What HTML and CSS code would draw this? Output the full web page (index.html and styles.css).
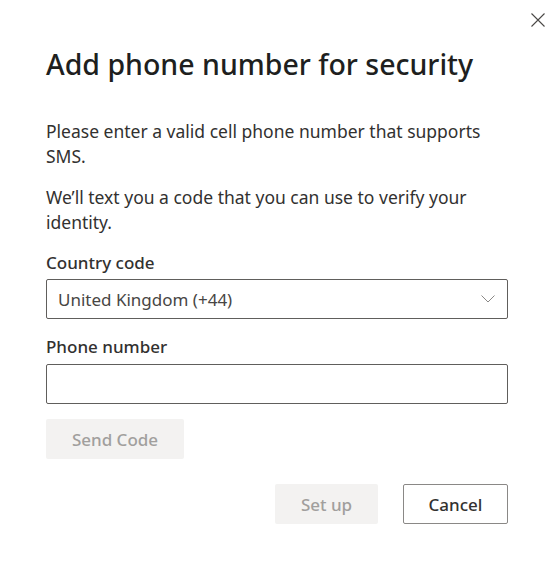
FILE: index.html
```html
<!DOCTYPE html>
<html lang="en">
<head>
    <meta charset="UTF-8">
    <meta name="viewport" content="width=device-width, initial-scale=1.0">
    <title>Add phone number for security</title>
    <link rel="stylesheet" href="styles.css">
</head>
<body>
    <div class="dialog">
        <div class="top-bar">
            <button class="close-btn" aria-label="Close">
                <svg width="14" height="14" viewBox="0 0 14 14">
                    <path d="M0.5 0.5 L13.5 13.5 M13.5 0.5 L0.5 13.5" stroke="#4a4846" stroke-width="1.1" fill="none"/>
                </svg>
            </button>
        </div>
        <h1>Add phone number for security</h1>
        <p>Please enter a valid cell phone number that supports SMS.</p>
        <p>We’ll text you a code that you can use to verify your identity.</p>

        <form id="phone-form">
            <label for="country-code">Country code</label>
            <div class="select-box" id="country-code">
                <span>United Kingdom (+44)</span>
                <svg width="14" height="8" viewBox="0 0 14 8">
                    <path d="M0.5 0.5 L7 7 L13.5 0.5" stroke="#8a8886" stroke-width="1" fill="none"/>
                </svg>
            </div>

            <label for="phone-number" class="phone-label">Phone number</label>
            <input type="text" id="phone-number">

            <button type="button" class="btn disabled send-btn">Send Code</button>

            <div class="actions">
                <button type="submit" class="btn disabled setup-btn">Set up</button>
                <button type="button" class="btn cancel-btn">Cancel</button>
            </div>
        </form>
    </div>
</body>
</html>
```

FILE: styles.css
```css
body {
    font-family: "Noto Sans", "Open Sans", sans-serif;
    background-color: #fff;
    color: #323130;
    margin: 0;
    padding: 0;
}
.dialog {
    width: 553px;
    box-sizing: border-box;
    padding: 0 45px 0 46px;
}
.top-bar {
    display: flex;
    justify-content: flex-end;
    height: 40px;
    margin-right: -45px;
}
.close-btn {
    background: none;
    border: none;
    padding: 0;
    width: 30px;
    height: 40px;
    display: flex;
    align-items: center;
    justify-content: center;
    cursor: pointer;
}
h1 {
    font-size: 28.5px;
    font-weight: 550;
    color: #201f1e;
    margin: 4px 0 0;
    line-height: 40px;
}
p {
    font-size: 17.5px;
    line-height: 25px;
    margin: 0 0 16px;
    color: #323130;
}
h1 + p {
    margin-top: 35px;
}
form {
    display: flex;
    flex-direction: column;
}
label {
    font-size: 17px;
    font-weight: 550;
    line-height: 24px;
    margin-bottom: 4px;
}
.phone-label {
    margin-bottom: 5px;
}
.select-box, input {
    box-sizing: border-box;
    height: 40px;
    width: 100%;
    border: 1px solid #605e5c;
    border-radius: 2px;
    font-family: inherit;
    font-size: 17px;
    color: #323130;
}
.select-box {
    display: flex;
    align-items: center;
    justify-content: space-between;
    padding: 0 12px 0 11px;
    margin-bottom: 16px;
}
.select-box span {
    color: #484644;
}
input {
    margin-bottom: 15px;
}
.btn {
    box-sizing: border-box;
    height: 40px;
    font-family: inherit;
    font-size: 17px;
    font-weight: 550;
    border-radius: 2px;
    cursor: pointer;
}
.disabled {
    background-color: #f3f2f1;
    color: #a19f9d;
    border: none;
    cursor: default;
}
.send-btn {
    width: 138px;
}
.actions {
    display: flex;
    justify-content: flex-end;
    gap: 25px;
    margin-top: 25px;
}
.setup-btn {
    width: 103px;
}
.cancel-btn {
    width: 105px;
    background: #fff;
    border: 1px solid #8a8886;
    color: #323130;
}
```
